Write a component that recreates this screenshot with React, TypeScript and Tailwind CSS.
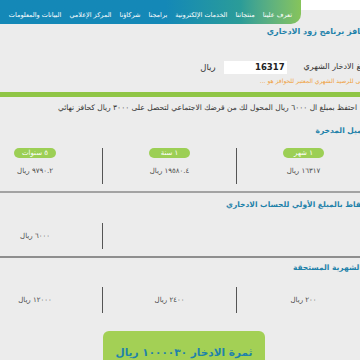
const navItems = [
  'تعرف علينا',
  'منتجاتنا',
  'الخدمات الإلكترونية',
  'برامجنا',
  'شركاؤنا',
  'المركز الإعلامي',
  'البيانات والمعلومات',
];

const periods = [
  { label: '١ شهر', value: '١٦٣١٧ ريال' },
  { label: '١ سنة', value: '١٩٥٨٠.٤ ريال' },
  { label: '٥ سنوات', value: '٩٧٩٠.٢ ريال' },
];

const monthly = ['٢٠٠ ريال', '٢٤٠٠ ريال', '١٢٠٠٠ ريال'];

export default function App() {
  return (
    <div className="w-[360px] h-[360px] overflow-hidden bg-[#ececec] font-['DejaVu_Sans',sans-serif]">
      <header className="flex">
        <nav
          dir="rtl"
          className="w-[301px] h-[24px] shrink-0 rounded-br-[10px] bg-linear-to-l from-[#86c45a] via-[#2b9c98] via-20% to-[#1488b7] to-45% flex items-center gap-[8px] pr-[9px] pt-[6px]"
        >
          {navItems.map((item) => (
            <span key={item} className="text-[6.5px] leading-[8px] text-white whitespace-nowrap">
              {item}
            </span>
          ))}
        </nav>
        <div className="flex-1 h-[10px] bg-white" />
      </header>

      <main dir="rtl" className="w-[402px] -ml-[32px]">
        <div className="h-[16px] flex items-center pr-[4px]">
          <h1 className="text-[8px] leading-[12px] font-bold text-[#1f82aa] whitespace-nowrap">
            حافز برنامج زود الادخاري
          </h1>
        </div>

        <div className="mt-[20px] h-[14px] flex items-center">
          <span className="text-[8px] text-[#333] whitespace-nowrap">مبلغ الادخار الشهري</span>
          <div dir="ltr" className="mr-[17px] w-[63px] h-[13px] bg-white text-right pr-[2px] text-[8.5px] leading-[13px] font-bold text-[#222]">
            16317
          </div>
          <span className="mr-[8px] text-[8.5px] text-[#333]">ريال</span>
        </div>

        <div className="mt-[2px] h-[10px] flex items-center -mr-[16px]">
          <p className="text-[6px] leading-[8px] text-[#f0a241] whitespace-nowrap">
            الحد الأقصى للرصيد الشهري المعتبر للحوافز هو ...
          </p>
        </div>

        <div className="mt-[6px] h-[5px] bg-[#8fc545]" />

        <div className="mt-[5px] h-[12px] flex items-center pr-[13px]">
          <p className="text-[7.5px] leading-[10px] text-[#333] whitespace-nowrap">
            احتفظ بمبلغ ال ٦٠٠٠ ريال المحول لك من قرضك الاجتماعي لتحصل على ٣٠٠٠ ريال كحافز نهائي
          </p>
        </div>

        <div className="mt-[11px] h-[12px] flex items-center -mr-[6px]">
          <h2 className="text-[7.5px] leading-[10px] font-bold text-[#1f82aa] whitespace-nowrap">التحميل المدخرة</h2>
        </div>

        <div className="mt-[11px] grid grid-cols-3">
          {periods.map((p, i) => (
            <div
              key={p.label}
              className={`h-[36px] flex flex-col items-center ${i < 2 ? 'border-l border-[#555]' : ''}`}
            >
              <div className="h-[10px] min-w-[41px] px-[8px] rounded-[5px] bg-[#9ccf55] text-white text-[7px] leading-[10px] text-center">
                {p.label}
              </div>
              <div className="mt-[7px] h-[12px] flex items-center text-[7px] text-[#4a4a4a]">{p.value}</div>
            </div>
          ))}
        </div>

        <div className="mt-[7px] h-[2px] bg-[#a3a3a3]" />

        <div className="mt-[6px] h-[12px] flex items-center pr-[6px]">
          <h2 className="text-[7.5px] leading-[10px] font-bold text-[#1f82aa] whitespace-nowrap">
            نقاط بالمبلغ الأولي للحساب الادخاري
          </h2>
        </div>

        <div className="mt-[12px] grid grid-cols-3">
          <div className="h-[26px]" />
          <div className="h-[26px] border-l border-[#555]" />
          <div className="h-[26px] flex items-center justify-center text-[7px] text-[#4a4a4a]">٦٠٠٠ ريال</div>
        </div>

        <div className="mt-[7px] h-[2px] bg-[#8e8e8e]" />

        <div className="mt-[4px] h-[12px] flex items-center pr-[8px]">
          <h2 className="text-[7.5px] leading-[10px] font-bold text-[#1f82aa] whitespace-nowrap">الشهرية المستحقة</h2>
        </div>

        <div className="mt-[13px] grid grid-cols-3">
          {monthly.map((m, i) => (
            <div
              key={m}
              className={`h-[26px] flex items-center justify-center text-[7px] text-[#4a4a4a] ${i < 2 ? 'border-l border-[#555]' : ''}`}
            >
              {m}
            </div>
          ))}
        </div>

        <div className="mt-[18px] flex">
          <div className="mr-[105px] w-[162px] h-[40px] rounded-t-[6px] bg-[#a3d055] flex justify-center pt-[14px]">
            <span className="text-[10.5px] leading-[14px] font-bold text-[#1f82aa] whitespace-nowrap">
              ثمرة الادخار ١٠٠٠٠٣٠ ريال
            </span>
          </div>
        </div>
      </main>
    </div>
  );
}
